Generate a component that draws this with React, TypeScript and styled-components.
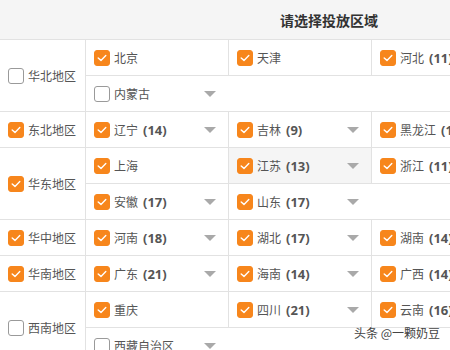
import styled, { createGlobalStyle } from "styled-components";

const GlobalStyle = createGlobalStyle`
  body {
    margin: 0;
    overflow: hidden;
    background: #fff;
    font-family: "Open Sans", "Noto Sans CJK SC", sans-serif;
  }
`;

const StyledPage = styled.div`
  position: relative;
  width: 450px;
  height: 350px;
  overflow: hidden;
`;

const StyledTable = styled.div`
  width: 658px;
`;

const StyledHeader = styled.div`
  height: 39px;
  display: flex;
  align-items: center;
  justify-content: center;
  background: #f5f5f5;
  border-bottom: 1px solid #e2e2e2;
  font-family: "Noto Sans CJK SC", sans-serif;
  font-size: 14px;
  font-weight: 700;
  color: #333;
`;

const StyledRegion = styled.div`
  display: flex;
  border-bottom: 1px solid #e2e2e2;
`;

const StyledRegionCell = styled.div`
  width: 86px;
  flex-shrink: 0;
  display: flex;
  align-items: center;
  padding-left: 8px;
  box-sizing: border-box;
  border-right: 1px solid #e2e2e2;
`;

const StyledSubRows = styled.div`
  flex: 1;
  display: flex;
  flex-direction: column;
`;

const StyledSubRow = styled.div`
  display: flex;
  height: 35px;
  &:not(:last-child) {
    border-bottom: 1px solid #e2e2e2;
  }
`;

const StyledCell = styled.div<{ $hover?: boolean }>`
  width: 142px;
  flex-shrink: 0;
  display: flex;
  align-items: center;
  padding: 0 12px 0 8px;
  box-sizing: border-box;
  background: ${(p) => (p.$hover ? "#f5f5f5" : "transparent")};
  &:not(:last-child) {
    width: 143px;
    border-right: 1px solid #e2e2e2;
  }
`;

const StyledBox = styled.span<{ $checked: boolean }>`
  width: 16px;
  height: 16px;
  flex-shrink: 0;
  box-sizing: border-box;
  border-radius: 3px;
  display: flex;
  align-items: center;
  justify-content: center;
  background: ${(p) => (p.$checked ? "#f7861c" : "#fff")};
  border: 1px solid ${(p) => (p.$checked ? "#f7861c" : "#9a9a9a")};
  svg {
    display: block;
  }
`;

const StyledLabel = styled.span`
  margin-left: 4px;
  font-family: "Noto Sans CJK SC", sans-serif;
  font-size: 12px;
  color: #555;
  white-space: nowrap;
`;

const StyledCount = styled.b`
  font-family: "Open Sans", sans-serif;
  font-size: 13px;
  font-weight: 700;
  margin-left: 5px;
  color: #555;
`;

const StyledArrow = styled.span`
  margin-left: auto;
  width: 0;
  height: 0;
  border-left: 6px solid transparent;
  border-right: 6px solid transparent;
  border-top: 6px solid #a9a9a9;
`;

const StyledMark = styled.div`
  position: absolute;
  right: 10px;
  bottom: 9px;
  font-family: "Noto Sans CJK SC", sans-serif;
  font-size: 12px;
  color: #444;
`;

type Prov = { name: string; count?: number; checked: boolean; hover?: boolean };
type Region = { name: string; checked: boolean; rows: Prov[][] };

const p = (name: string, count?: number, checked = true, hover = false): Prov => ({ name, count, checked, hover });

const regions: Region[] = [
  { name: "华北地区", checked: false, rows: [[p("北京"), p("天津"), p("河北", 11), p("山西", 11)], [p("内蒙古", undefined, false)]] },
  { name: "东北地区", checked: true, rows: [[p("辽宁", 14), p("吉林", 9), p("黑龙江", 13)]] },
  { name: "华东地区", checked: true, rows: [[p("上海"), p("江苏", 13, true, true), p("浙江", 11), p("福建", 9)], [p("安徽", 17), p("山东", 17)]] },
  { name: "华中地区", checked: true, rows: [[p("河南", 18), p("湖北", 17), p("湖南", 14)]] },
  { name: "华南地区", checked: true, rows: [[p("广东", 21), p("海南", 14), p("广西", 14)]] },
  { name: "西南地区", checked: false, rows: [[p("重庆"), p("四川", 21), p("云南", 16), p("贵州", 9)], [p("西藏自治区", undefined, false)]] },
];

const Check = ({ checked }: { checked: boolean }) => (
  <StyledBox $checked={checked}>
    {checked && (
      <svg width="10" height="8" viewBox="0 0 10 8">
        <polyline points="1.2,4 4,6.4 8.8,1.6" fill="none" stroke="#fff" strokeWidth="1.4" strokeLinecap="round" strokeLinejoin="round" />
      </svg>
    )}
  </StyledBox>
);

const App = () => {
  return (
    <StyledPage>
      <GlobalStyle />
      <StyledTable>
        <StyledHeader>请选择投放区域</StyledHeader>
        {regions.map((r) => (
          <StyledRegion key={r.name}>
            <StyledRegionCell>
              <Check checked={r.checked} />
              <StyledLabel>{r.name}</StyledLabel>
            </StyledRegionCell>
            <StyledSubRows>
              {r.rows.map((row, i) => (
                <StyledSubRow key={i}>
                  {row.map((c) => (
                    <StyledCell key={c.name} $hover={c.hover}>
                      <Check checked={c.checked} />
                      <StyledLabel>
                        {c.name}
                        {c.count !== undefined && <StyledCount>({c.count})</StyledCount>}
                      </StyledLabel>
                      {(c.count !== undefined || !c.checked) && <StyledArrow />}
                    </StyledCell>
                  ))}
                </StyledSubRow>
              ))}
            </StyledSubRows>
          </StyledRegion>
        ))}
      </StyledTable>
      <StyledMark>头条 @一颗奶豆</StyledMark>
    </StyledPage>
  );
};

export default App;
